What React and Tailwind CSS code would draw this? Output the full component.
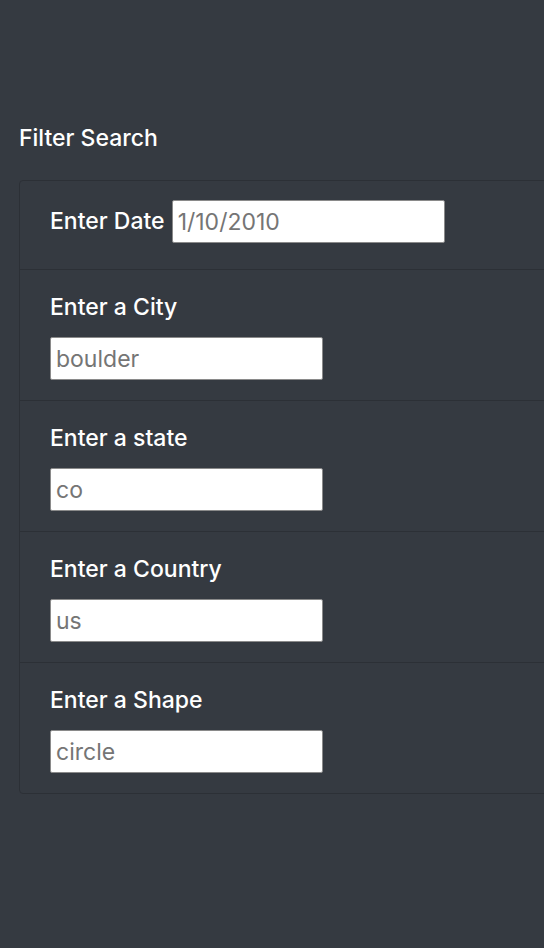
const fields = [
  { label: "Enter a City", placeholder: "boulder" },
  { label: "Enter a state", placeholder: "co" },
  { label: "Enter a Country", placeholder: "us" },
  { label: "Enter a Shape", placeholder: "circle" },
];

const inputClass =
  "h-[43px] bg-white border border-[#8a8a8a] rounded-[2px] px-[5px] text-[23px] text-[#333] placeholder:text-[#757575] outline-none";

export default function App() {
  return (
    <div
      className="min-h-[948px] bg-[#353a41] text-white overflow-hidden"
      style={{ fontFamily: 'Inter, "Liberation Sans", Arial, sans-serif' }}
    >
      <div className="pt-[122px] pl-[19px]">
        <h4 className="text-[23px] leading-[33px] font-medium">Filter Search</h4>

        <ul className="mt-[25px] w-[560px] border border-[#2c3036] rounded-[4px]">
          <li className="flex items-center pl-[30px] pt-[19px] pb-[26px] border-b border-[#2c3036]">
            <label className="text-[23px] leading-[33px] mr-[7px] font-medium">Enter Date</label>
            <input className={`${inputClass} w-[273px]`} placeholder="1/10/2010" />
          </li>
          {fields.map((f, i) => (
            <li
              key={f.label}
              className={`flex flex-col items-start pl-[30px] pt-[21px] pb-[20px] ${
                i < fields.length - 1 ? "border-b border-[#2c3036]" : ""
              }`}
            >
              <label className="text-[23px] leading-[33px] mb-[13px] font-medium">{f.label}</label>
              <input className={`${inputClass} w-[273px]`} placeholder={f.placeholder} />
            </li>
          ))}
        </ul>
      </div>
    </div>
  );
}
